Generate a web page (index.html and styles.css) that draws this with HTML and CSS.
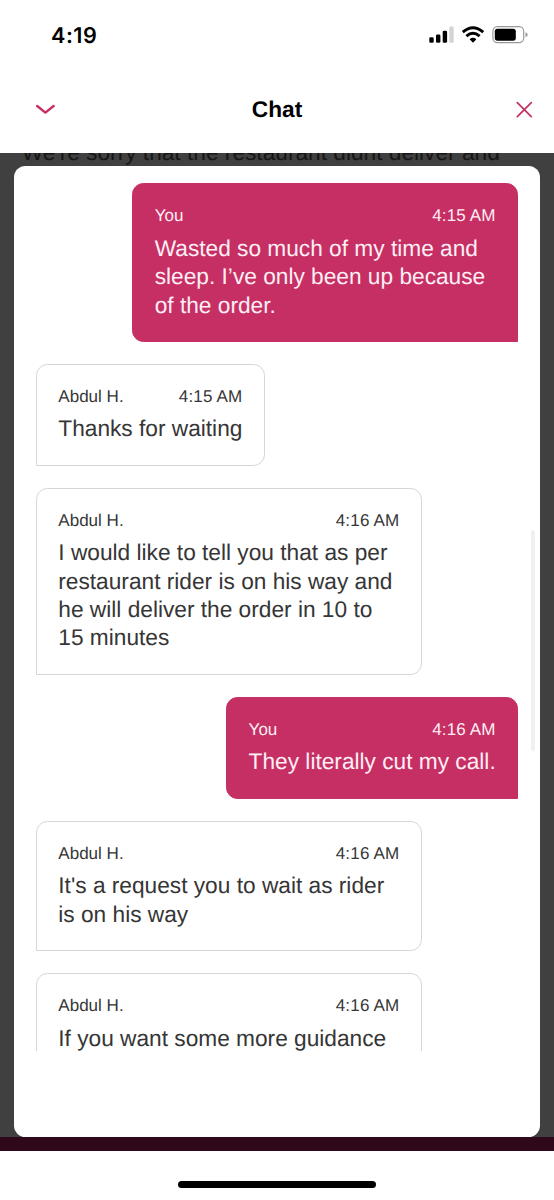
FILE: index.html
```html
<!DOCTYPE html>
<html lang="en">
<head>
<meta charset="utf-8">
<title>Chat</title>
<link rel="stylesheet" href="styles.css">
</head>
<body>
<div class="screen">
  <div class="status">
    <span class="clock">4:19</span>
    <svg class="indicators" width="100" height="20" viewBox="0 0 100 20">
      <rect x="0.3" y="12.2" width="4.4" height="5.6" rx="1.3"/>
      <rect x="7" y="9.4" width="4.4" height="8.4" rx="1.3"/>
      <rect x="13.7" y="5.7" width="4.4" height="12.1" rx="1.3"/>
      <rect x="20.3" y="1.6" width="4.4" height="16.2" rx="1.3" fill="#d4d4d4"/>
      <g fill="none" stroke="#000" stroke-width="2.9">
        <path d="M33.8 7.2Q44 -1.7 54.2 7.2"/>
        <path d="M37.4 11.2Q44 5.4 50.6 11.2"/>
      </g>
      <path d="M40.6 14.2Q44 11.4 47.4 14.2L44 17.8Z"/>
      <rect x="63.9" y="1.7" width="30.8" height="16" rx="4.6" fill="none" stroke="#999" stroke-width="1.2"/>
      <rect x="65.8" y="3.7" width="21" height="12" rx="2.6"/>
      <path d="M96.5 7.2Q98.7 8 98.7 9.8T96.5 12.3Z" fill="#999"/>
    </svg>
  </div>
  <header class="header">
    <svg width="20" height="20" viewBox="0 0 20 20" class="icon"><path d="M2.2 7L10.4 13.6L18.6 7" stroke-width="2.4"/></svg>
    <h1 class="title">Chat</h1>
    <svg width="20" height="20" viewBox="0 0 20 20" class="icon"><path d="M3.3 3.6L17.3 17.6M17.3 3.6L3.3 17.6" stroke-width="1.7"/></svg>
  </header>
  <main class="backdrop">
    <p class="behind">We're sorry that the restaurant didnt deliver and</p>
    <section class="card">
      <div class="messages">
        <article class="bubble mine wide">
          <div class="meta"><span>You</span><time>4:15 AM</time></div>
          <p class="text">Wasted so much of my time and<br>sleep. I’ve only been up because<br>of the order.</p>
        </article>
        <article class="bubble">
          <div class="meta"><span>Abdul H.</span><time>4:15 AM</time></div>
          <p class="text">Thanks for waiting</p>
        </article>
        <article class="bubble wide">
          <div class="meta"><span>Abdul H.</span><time>4:16 AM</time></div>
          <p class="text">I would like to tell you that as per<br>restaurant rider is on his way and<br>he will deliver the order in 10 to<br>15 minutes</p>
        </article>
        <article class="bubble mine">
          <div class="meta"><span>You</span><time>4:16 AM</time></div>
          <p class="text">They literally cut my call.</p>
        </article>
        <article class="bubble wide">
          <div class="meta"><span>Abdul H.</span><time>4:16 AM</time></div>
          <p class="text">It's a request you to wait as rider<br>is on his way</p>
        </article>
        <article class="bubble wide cut">
          <div class="meta"><span>Abdul H.</span><time>4:16 AM</time></div>
          <p class="text">If you want some more guidance</p>
        </article>
      </div>
      <div class="scrollbar"></div>
    </section>
  </main>
  <div class="strip"></div>
  <footer class="home"><div class="home-bar"></div></footer>
</div>
</body>
</html>
```
FILE: styles.css
```css
* { box-sizing: border-box; }
body {
  margin: 0;
  background: #fff;
  font-family: "Liberation Sans", Arial, sans-serif;
  text-rendering: geometricPrecision;
}
.screen {
  width: 554px;
  height: 1200px;
  display: flex;
  flex-direction: column;
  overflow: hidden;
}
.status {
  height: 70px;
  padding: 0 25px 0 51px;
  display: flex;
  justify-content: space-between;
  align-items: center;
}
.clock {
  font: 600 21.6px/26px Inter, sans-serif;
  letter-spacing: 0.5px;
  padding-top: 2px;
}
.indicators { display: block; }
.header {
  height: 83px;
  padding: 0 20px 5px 35px;
  display: flex;
  justify-content: space-between;
  align-items: center;
}
.title {
  margin: 0 15px 0 0;
  font-size: 22.7px;
  line-height: 28px;
  font-weight: 700;
}
.icon {
  fill: none;
  stroke: #c62f63;
  stroke-linecap: round;
  stroke-linejoin: round;
}
.backdrop {
  height: 984.3px;
  background: #404040;
  padding: 0 14.3px;
  overflow: hidden;
}
.behind {
  margin: -13.2px 0 0 7.4px;
  height: 26.6px;
  font-size: 22.7px;
  line-height: 25px;
  white-space: nowrap;
  color: #161616;
}
.card {
  position: relative;
  height: 970.9px;
  padding: 16.8px 21.5px 0;
  border-radius: 11.4px;
  background: #fff;
}
.messages {
  height: 868px;
  display: flex;
  flex-direction: column;
  align-items: flex-start;
  gap: 21.7px;
  overflow: hidden;
}
.bubble {
  flex: none;
  padding: 21.1px 21.5px 22.3px;
  border: 1px solid #d6d6d6;
  border-radius: 11.4px 11.4px 11.4px 0;
  color: #363636;
}
.mine {
  align-self: flex-end;
  background: #c62f63;
  border-color: #c62f63;
  border-radius: 11.4px 11.4px 0 11.4px;
  color: #ffeef5;
}
.wide { width: 386px; }
.cut { height: 102px; }
.meta {
  display: flex;
  justify-content: space-between;
  padding-top: 1.2px;
  margin-bottom: 7.3px;
  font-size: 17.05px;
  line-height: 19.9px;
}
.meta time { letter-spacing: 0.15px; }
.text {
  margin: 0;
  font-size: 22.7px;
  line-height: 28.4px;
  white-space: nowrap;
}
.scrollbar {
  position: absolute;
  top: 363.5px;
  right: 4.5px;
  width: 4px;
  height: 221px;
  border-radius: 2px;
  background: #f0f0f0;
}
.strip { height: 13.7px; background: #30081b; }
.home {
  flex: 1;
  display: flex;
  justify-content: center;
  padding-top: 30px;
}
.home-bar { width: 198px; height: 7.4px; border-radius: 4px; background: #000; }
```
